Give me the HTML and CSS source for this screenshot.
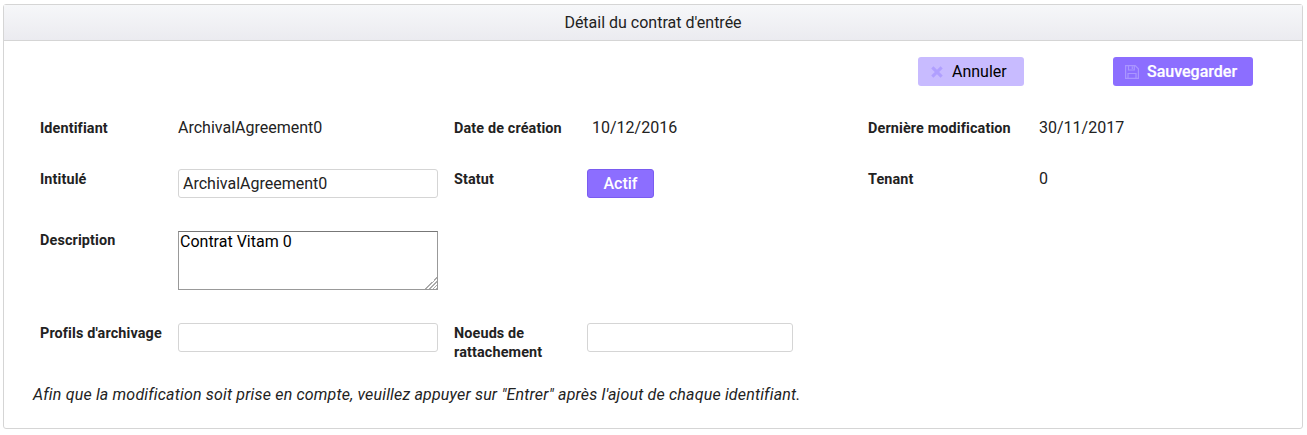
FILE: index.html
```html
<!DOCTYPE html>
<html lang="fr">
<head>
<meta charset="utf-8">
<title>Détail du contrat d'entrée</title>
<link rel="stylesheet" href="styles.css">
</head>
<body>
<main class="panel">
  <header class="panel-title">Détail du contrat d'entrée</header>
  <div class="actions">
    <button class="btn btn-cancel"><svg class="icon" width="12" height="12" viewBox="0 0 12 12"><path d="M2 2l8 8M10 2l-8 8" stroke="currentColor" stroke-width="3.4" stroke-linecap="square" transform="translate(.6 .6) scale(.9)"/></svg>Annuler</button>
    <button class="btn btn-save"><svg class="icon" width="14" height="14" viewBox="0 0 14 14"><path d="M.6.6h9.600l3.200 3.200v9.600H.6zM3.500.6v4.400h5.800v-4.400M3 13.400V8.500h8v4.900M7.300 1.500v2.500" fill="none" stroke="currentColor" stroke-width="1.200"/></svg>Sauvegarder</button>
  </div>
  <form class="fields">
    <div class="row row-id">
      <label>Identifiant</label><span>ArchivalAgreement0</span>
      <label>Date de création</label><span class="date">10/12/2016</span>
      <label>Dernière modification</label><span>30/11/2017</span>
    </div>
    <div class="row row-name">
      <label>Intitulé</label><input type="text" value="ArchivalAgreement0">
      <label>Statut</label><button type="button" class="btn btn-status">Actif</button>
      <label>Tenant</label><span>0</span>
    </div>
    <div class="row row-description">
      <label>Description</label><textarea>Contrat Vitam 0</textarea>
    </div>
    <div class="row row-profiles">
      <label>Profils d'archivage</label><input type="text">
      <label>Noeuds de rattachement</label><input class="short" type="text">
    </div>
  </form>
  <p class="hint">Afin que la modification soit prise en compte, veuillez appuyer sur "Entrer" après l'ajout de chaque identifiant.</p>
</main>
</body>
</html>
```
FILE: styles.css
```css
* { box-sizing: border-box; }
body { margin: 0; padding: 4px 4px 0 3px; background: #fff; color: #222; font: 16px/19px Roboto, sans-serif; }
.panel { height: 425px; border: 1px solid #d5d5d5; border-radius: 3px; }
.panel-title { height: 36px; padding-top: 8px; text-align: center; color: #222; background: linear-gradient(#f6f7f9, #ebebf0); border-bottom: 1px solid #d5d5d5; }
.actions { display: flex; justify-content: flex-end; gap: 89px; padding: 16px 49px 0 0; }
.btn { display: flex; align-items: center; height: 29px; padding: 0 0 0 12px; border: 0; border-radius: 3px; font: inherit; color: #fff; background: #8c6eff; }
.btn-cancel { width: 106px; color: #000; background: #c8bbff; }
.btn-save { width: 140px; font-weight: 500; -webkit-text-stroke: .2px; }
.icon { flex: none; margin-right: 8px; color: #aa96ff; }
.btn-cancel .icon { margin-left: 1px; margin-right: 9px; color: #b09fff; }
.row { display: grid; grid-template-columns: 138px 276px 133px 281px 171px 1fr; align-items: start; padding-left: 36px; }
.row-id { padding-top: 32px; height: 83px; }
.row-name { height: 62px; }
.row-description { height: 92px; }
.row-profiles { height: 62px; }
.row label { font-size: 14.4px; font-weight: 700; letter-spacing: .13px; padding-top: 1px; white-space: nowrap; }
.row-description label { padding-top: 0; }
.row-profiles label { white-space: normal; }
.date { padding-left: 5px; }
input { width: 260px; height: 29px; padding: 0 4px; border: 1px solid #d5d5d5; border-radius: 3px; font: inherit; color: #222; }
.short { width: 206px; }
textarea { width: 260px; height: 59px; padding: 0 1px; border: 1px solid #999; border-top-color: #777; border-radius: 0; font: inherit; color: #000; }
textarea::-webkit-resizer { background: linear-gradient(135deg, transparent 60%, #aaa 60% 66%, #fff 66% 72%, #aaa 72% 78%, #fff 78% 84%, #aaa 84% 90%, #fff 90% 96%, #aaa 96%); }
.btn-status { width: 67px; padding: 0; justify-content: center; border: 1px solid #7a5cf0; font-weight: 500; }
.hint { margin: 0; padding-left: 29px; font-style: italic; letter-spacing: .175px; }
```
